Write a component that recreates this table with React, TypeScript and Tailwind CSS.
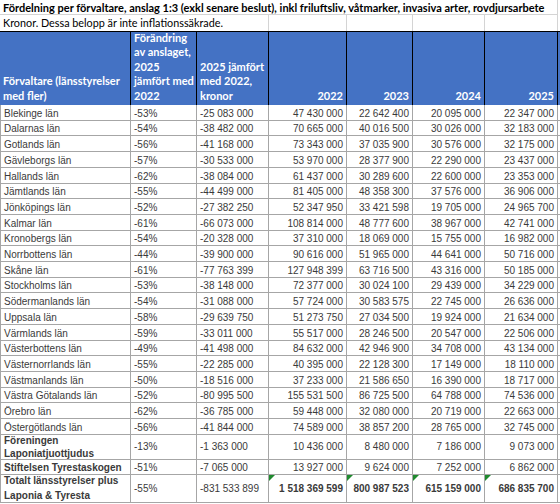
import React from "react";

type Row = [string, string, string, string, string, string, string];

const rows: Row[] = [
  ["Blekinge län", "-53%", "-25 083 000", "47 430 000", "22 642 400", "20 095 000", "22 347 000"],
  ["Dalarnas län", "-54%", "-38 482 000", "70 665 000", "40 016 500", "30 026 000", "32 183 000"],
  ["Gotlands län", "-56%", "-41 168 000", "73 343 000", "37 035 900", "30 576 000", "32 175 000"],
  ["Gävleborgs län", "-57%", "-30 533 000", "53 970 000", "28 377 900", "22 290 000", "23 437 000"],
  ["Hallands län", "-62%", "-38 084 000", "61 437 000", "30 289 600", "22 600 000", "23 353 000"],
  ["Jämtlands län", "-55%", "-44 499 000", "81 405 000", "48 358 300", "37 576 000", "36 906 000"],
  ["Jönköpings län", "-52%", "-27 382 250", "52 347 950", "33 421 598", "19 705 000", "24 965 700"],
  ["Kalmar län", "-61%", "-66 073 000", "108 814 000", "48 777 600", "38 967 000", "42 741 000"],
  ["Kronobergs län", "-54%", "-20 328 000", "37 310 000", "18 069 000", "15 755 000", "16 982 000"],
  ["Norrbottens län", "-44%", "-39 900 000", "90 616 000", "51 965 000", "44 641 000", "50 716 000"],
  ["Skåne län", "-61%", "-77 763 399", "127 948 399", "63 716 500", "43 316 000", "50 185 000"],
  ["Stockholms län", "-53%", "-38 148 000", "72 377 000", "30 024 100", "29 439 000", "34 229 000"],
  ["Södermanlands län", "-54%", "-31 088 000", "57 724 000", "30 583 575", "22 745 000", "26 636 000"],
  ["Uppsala län", "-58%", "-29 639 750", "51 273 750", "27 034 500", "19 924 000", "21 634 000"],
  ["Värmlands län", "-59%", "-33 011 000", "55 517 000", "28 246 500", "20 547 000", "22 506 000"],
  ["Västerbottens län", "-49%", "-41 498 000", "84 632 000", "42 946 900", "34 708 000", "43 134 000"],
  ["Västernorrlands län", "-55%", "-22 285 000", "40 395 000", "22 128 300", "17 149 000", "18 110 000"],
  ["Västmanlands län", "-50%", "-18 516 000", "37 233 000", "21 586 650", "16 390 000", "18 717 000"],
  ["Västra Götalands län", "-52%", "-80 995 500", "155 531 500", "86 725 500", "64 788 000", "74 536 000"],
  ["Örebro län", "-62%", "-36 785 000", "59 448 000", "32 080 000", "20 719 000", "22 663 000"],
  ["Östergötlands län", "-56%", "-41 844 000", "74 589 000", "38 857 200", "28 765 000", "32 745 000"],
];

const cell = "border-r border-[#a6a6a6] px-[3px] whitespace-nowrap";
const calibri = "font-['Lato',sans-serif]";

function Flag() {
  return (
    <svg className="absolute left-0 top-0" width="6" height="6" viewBox="0 0 6 6">
      <polygon points="0,0 6,0 0,6" fill="#1f8a2e" />
    </svg>
  );
}

export default function App() {
  return (
    <div className="w-[560px] h-[504px] bg-white overflow-hidden font-['Liberation_Sans',Arial,sans-serif] text-[10px] text-[#3a3a3a]">
      {/* title */}
      <div className={`h-[15px] w-[558px] border-b border-r border-[#d4d4d4] px-[3px] leading-[15px] whitespace-nowrap text-[11px] font-bold text-black ${calibri}`}>
        Fördelning per förvaltare, anslag 1:3 (exkl senare beslut), inkl friluftsliv, våtmarker, invasiva arter, rovdjursarbete
      </div>

      {/* subtitle */}
      <div className={`flex h-[16px] text-[10.8px] leading-[15px] text-black ${calibri}`}>
        <div className="w-[269px] border-r border-[#d4d4d4] px-[3px] whitespace-nowrap">Kronor. Dessa belopp är inte inflationssäkrade.</div>
        <div className="w-[78px] border-r border-[#d4d4d4]" />
        <div className="w-[66px] border-r border-[#d4d4d4]" />
        <div className="w-[72px] border-r border-[#d4d4d4]" />
        <div className="w-[73px] border-r border-[#d4d4d4]" />
      </div>

      {/* header */}
      <div className={`flex h-[74px] border-t border-black bg-[#4472c4] text-[11px] font-bold leading-[14.5px] text-white ${calibri}`}>
        <div className="w-[131px] border-r border-black flex flex-col justify-end px-[3px] pb-[2px] whitespace-nowrap">
          <span>Förvaltare (länsstyrelser</span>
          <span>med fler)</span>
        </div>
        <div className="w-[66px] border-r border-black flex flex-col justify-end px-[3px] pb-[2px] whitespace-nowrap">
          <span>Förändring</span>
          <span>av anslaget,</span>
          <span>2025</span>
          <span>jämfört med</span>
          <span>2022</span>
        </div>
        <div className="w-[72px] border-r border-black flex flex-col justify-end px-[3px] pb-[2px] whitespace-nowrap">
          <span>2025 jämfört</span>
          <span>med 2022,</span>
          <span>kronor</span>
        </div>
        <div className="w-[78px] border-r border-black flex items-end justify-end px-[3px] pb-[2px]">2022</div>
        <div className="w-[66px] border-r border-black flex items-end justify-end px-[3px] pb-[2px]">2023</div>
        <div className="w-[72px] border-r border-black flex items-end justify-end px-[3px] pb-[2px]">2024</div>
        <div className="w-[73px] border-r border-black flex items-end justify-end px-[3px] pb-[2px]">2025</div>
      </div>

      {/* data */}
      {rows.map((r) => (
        <div key={r[0]} className="flex h-[15.71px] border-b border-[#a6a6a6] leading-[12px] items-stretch">
          <div className={`w-[131px] border-l ${cell} flex items-end`}>{r[0]}</div>
          <div className={`w-[66px] ${cell} flex items-end`}>{r[1]}</div>
          <div className={`w-[72px] ${cell} flex items-end`}>{r[2]}</div>
          <div className={`w-[78px] ${cell} flex items-end justify-end`}>{r[3]}</div>
          <div className={`w-[66px] ${cell} flex items-end justify-end`}>{r[4]}</div>
          <div className={`w-[72px] ${cell} flex items-end justify-end`}>{r[5]}</div>
          <div className={`w-[73px] ${cell} flex items-end justify-end`}>{r[6]}</div>
        </div>
      ))}

      <div className="flex h-[25px] border-b border-[#a6a6a6] leading-[13px]">
        <div className={`w-[131px] border-l ${cell} flex flex-col justify-center font-bold`}>
          <span>Föreningen</span>
          <span>Laponiatjuottjudus</span>
        </div>
        <div className={`w-[66px] ${cell} flex items-center`}>-13%</div>
        <div className={`w-[72px] ${cell} flex items-center`}>-1 363 000</div>
        <div className={`w-[78px] ${cell} flex items-center justify-end`}>10 436 000</div>
        <div className={`w-[66px] ${cell} flex items-center justify-end`}>8 480 000</div>
        <div className={`w-[72px] ${cell} flex items-center justify-end`}>7 186 000</div>
        <div className={`w-[73px] ${cell} flex items-center justify-end`}>9 073 000</div>
      </div>

      <div className="flex h-[15px] border-b border-[#a6a6a6] leading-[12px]">
        <div className={`w-[131px] border-l ${cell} flex items-end font-bold`}>Stiftelsen Tyrestaskogen</div>
        <div className={`w-[66px] ${cell} flex items-end`}>-51%</div>
        <div className={`w-[72px] ${cell} flex items-end`}>-7 065 000</div>
        <div className={`w-[78px] ${cell} flex items-end justify-end`}>13 927 000</div>
        <div className={`w-[66px] ${cell} flex items-end justify-end`}>9 624 000</div>
        <div className={`w-[72px] ${cell} flex items-end justify-end`}>7 252 000</div>
        <div className={`w-[73px] ${cell} flex items-end justify-end`}>6 862 000</div>
      </div>

      <div className="flex h-[28px] border-b border-[#a6a6a6] leading-[15px]">
        <div className={`w-[131px] border-l ${cell} flex flex-col justify-center font-bold`}>
          <span>Totalt länsstyrelser plus</span>
          <span>Laponia &amp; Tyresta</span>
        </div>
        <div className={`w-[66px] ${cell} flex items-center`}>-55%</div>
        <div className={`w-[72px] ${cell} flex items-center`}>-831 533 899</div>
        <div className={`relative w-[78px] ${cell} flex items-center justify-end font-bold`}><Flag />1 518 369 599</div>
        <div className={`relative w-[66px] ${cell} flex items-center justify-end font-bold`}><Flag />800 987 523</div>
        <div className={`relative w-[72px] ${cell} flex items-center justify-end font-bold`}><Flag />615 159 000</div>
        <div className={`relative w-[73px] ${cell} flex items-center justify-end font-bold`}><Flag />686 835 700</div>
      </div>
    </div>
  );
}
